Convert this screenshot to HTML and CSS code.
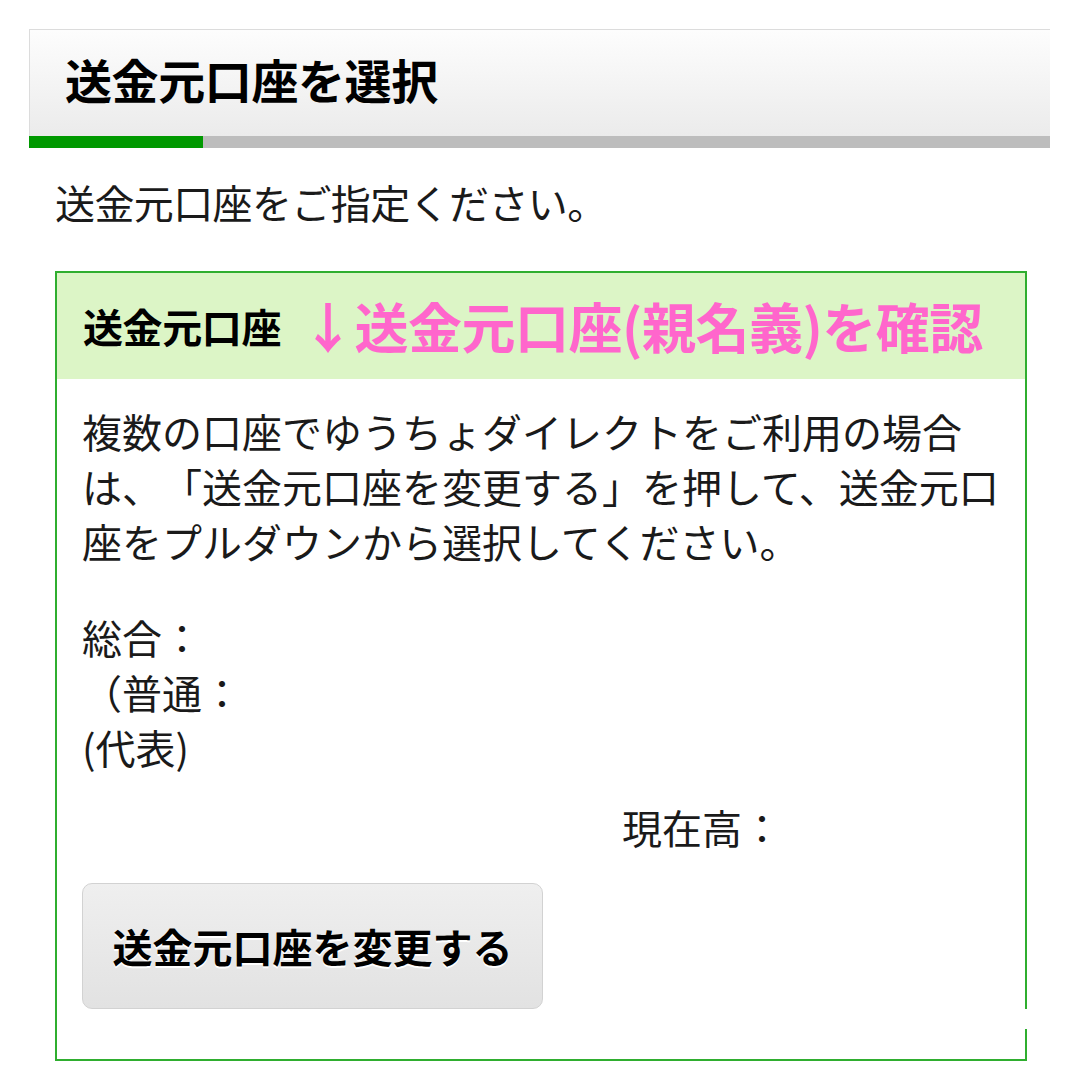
FILE: index.html
```html
<!DOCTYPE html>
<html lang="ja">
<head>
<meta charset="utf-8">
<link rel="stylesheet" href="styles.css">
</head>
<body>
<div class="page">
  <div class="title-bar">
    <h1 class="title">送金元口座を選択</h1>
  </div>
  <div class="progress"><div class="progress-done"></div></div>
  <p class="lead">送金元口座をご指定ください。</p>
  <section class="account-box">
    <div class="account-head">
      <span class="account-label">送金元口座</span>
      <span class="account-note">↓送金元口座(親名義)を確認</span>
    </div>
    <div class="account-body">
      <p class="desc">複数の口座でゆうちょダイレクトをご利用の場合は、「送金元口座を変更する」を押して、送金元口座をプルダウンから選択してください。</p>
      <div class="info">
        <div class="info-line">総合：</div>
        <div class="info-line">（普通：</div>
        <div class="info-line">(代表)</div>
      </div>
      <div class="balance">現在高：</div>
      <button class="change-btn" type="button">送金元口座を変更する</button>
    </div>
    <span class="notch"></span>
  </section>
</div>
</body>
</html>
```
FILE: styles.css
```css
html, body {
  margin: 0;
  padding: 0;
  background: #fff;
}
body {
  font-family: "Noto Sans CJK JP", "Noto Sans", sans-serif;
  color: #1a1a1a;
  width: 1080px;
  height: 1080px;
  overflow: hidden;
  text-spacing-trim: space-all;
}
.page {
  padding: 29px 30px 0 29px;
}
.title-bar {
  height: 106px;
  border-top: 1px solid #dcdcdc;
  border-left: 1px solid #dcdcdc;
  background: linear-gradient(#fdfdfd, #ebebeb);
  display: flex;
  align-items: center;
  padding-left: 35px;
}
.title {
  margin: 0;
  font-size: 47px;
  font-weight: 700;
  line-height: 1;
  color: #000;
  letter-spacing: -0.4px;
  padding-bottom: 10px;
}
.progress {
  height: 12px;
  background: #bdbdbd;
}
.progress-done {
  width: 174px;
  height: 100%;
  background: #009900;
}
.lead {
  margin: 27px 0 0 26px;
  font-size: 40px;
  line-height: 55px;
  color: #1a1a1a;
  letter-spacing: -0.6px;
}
.account-box {
  position: relative;
  margin: 41px 23px 0 26px;
  border: 2px solid #2fae2f;
}
.account-head {
  height: 106px;
  background: #dcf5c6;
  display: flex;
  align-items: center;
  padding-left: 26px;
  gap: 20px;
}
.account-label {
  font-size: 40px;
  font-weight: 700;
  color: #000;
  line-height: 1;
  letter-spacing: -0.4px;
}
.account-note {
  font-size: 54px;
  font-weight: 700;
  color: #ff66cc;
  line-height: 1;
  letter-spacing: -0.5px;
}
.account-body {
  padding: 25px 20px 50px 25px;
  font-size: 40px;
  line-height: 55px;
  color: #1a1a1a;
}
.desc {
  margin: 0 0 41px;
}
.info-line {
  white-space: nowrap;
}
.balance {
  margin-top: 25px;
  padding-left: 540px;
}
.change-btn {
  display: block;
  margin-top: 28px;
  width: 461px;
  height: 126px;
  border: 1px solid #d2d2d2;
  border-radius: 10px;
  background: linear-gradient(#efefef, #e2e2e2);
  font-family: "Noto Sans CJK JP", "Noto Sans", sans-serif;
  font-size: 40px;
  font-weight: 700;
  color: #000;
  text-shadow: 0 2px 0 #fff;
  padding: 0;
}
.notch {
  position: absolute;
  right: -4px;
  bottom: 30px;
  width: 5px;
  height: 20px;
  background: #fff;
}
```
